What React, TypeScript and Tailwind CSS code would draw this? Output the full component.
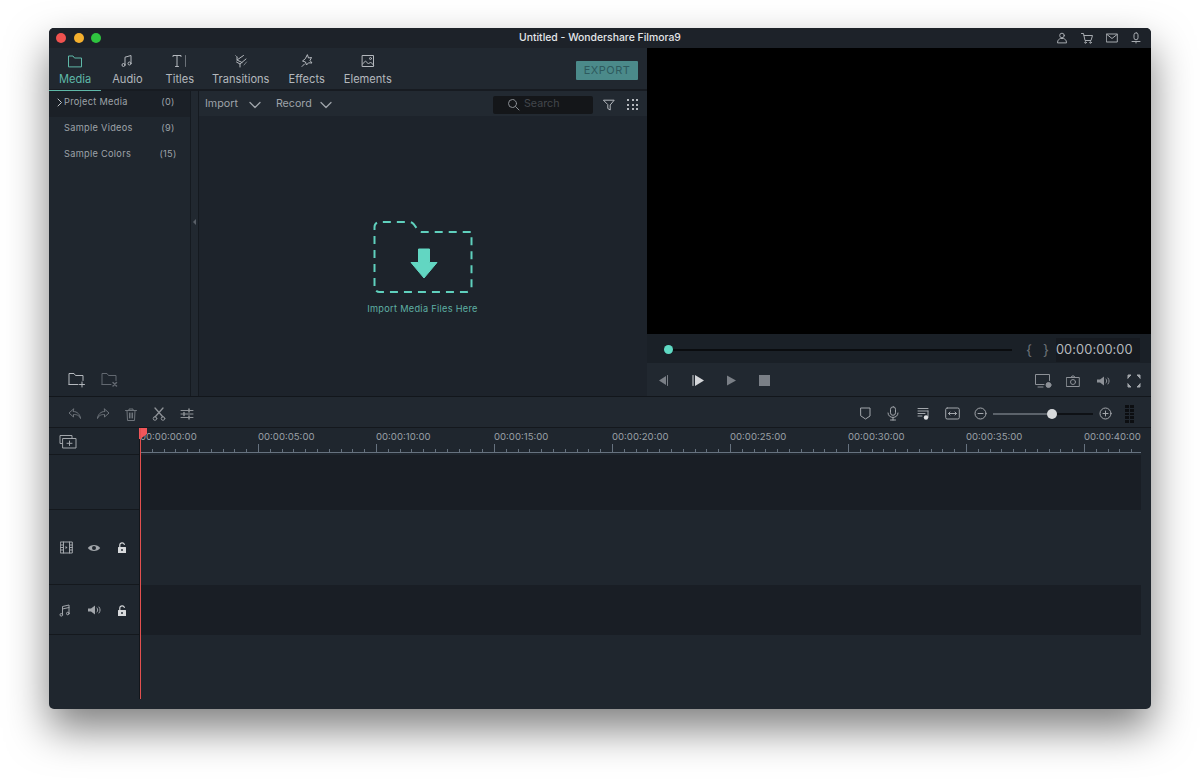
import React from "react";

const S = ({ w = 16, h = 16, vb, children, className = "" }: { w?: number; h?: number; vb?: string; children: React.ReactNode; className?: string }) => (
  <svg width={w} height={h} viewBox={vb ?? `0 0 ${w} ${h}`} fill="none" stroke="currentColor" strokeWidth={1} strokeLinecap="round" strokeLinejoin="round" className={`shrink-0 ${className}`}>
    {children}
  </svg>
);

const tabs = [
  { label: "Media", cls: "ml-[10px] text-[#5fb8a8]", icon: <S w={16} h={14}><path d="M1.5 12.5V2h4.5l1.5 2h7v8.500z" /></S> },
  { label: "Audio", cls: "ml-[21px] text-[#b4b8bd]", icon: <S w={14} h={14}><path d="M5 10.500V3.200L11 1.500v7.500" /><circle cx="3.500" cy="11" r="1.500" /><circle cx="9.500" cy="9.500" r="1.500" /></S> },
  { label: "Titles", cls: "ml-[23px] text-[#b4b8bd]", icon: <S w={16} h={14}><path d="M1 2.500V1.500h8v1M5 1.500v11M3.500 12.500h3" /><path d="M13.500 1.500v11" stroke="#6b7178" /></S> },
  { label: "Transitions", cls: "ml-[18px] text-[#b4b8bd]", icon: <S w={14} h={14}><path d="M9.500 1.500 3 6l5 2.500M3 3v3.200" /><path d="M12 5 6 10l-3.500-2M6 10V13" /><path d="M1.500 1.500 4 4M12.500 8l-2.500 3" stroke="#7d8389" /></S> },
  { label: "Effects", cls: "ml-[19px] text-[#b4b8bd]", icon: <S w={14} h={14}><path d="M7.500 1 8.500 4l3-.5-1.500 3 2 2.500-3.500-.2L6.500 11l-1-3L2.500 7l2.500-2z" /><path d="M2 12.500 4.500 10" /></S> },
  { label: "Elements", cls: "ml-[19px] text-[#b4b8bd]", icon: <S w={14} h={14}><rect x="1.500" y="1.500" width="11" height="11" /><path d="m1.500 10 3-3 3 3 2-2 3 3" /><circle cx="9.500" cy="4.500" r="1" /></S> },
];

const media = [
  { name: "Project Media", n: "(0)", active: true },
  { name: "Sample Videos", n: "(9)", active: false },
  { name: "Sample Colors", n: "(15)", active: false },
];

const marks = ["00:00:00:00", "00:00:05:00", "00:00:10:00", "00:00:15:00", "00:00:20:00", "00:00:25:00", "00:00:30:00", "00:00:35:00", "00:00:40:00"];

const Chevron = () => (
  <S w={12} h={8}><path d="M1 1.500 6 6.500l5-5" strokeWidth={1.3} /></S>
);

const Lock = () => (
  <S w={14} h={13} className="text-[#d8dadc]"><rect x="3" y="6" width="8" height="6" fill="currentColor" stroke="none" rx=".5" /><path d="M4.800 6V3.800C4.800 1.300 8.800 1.300 9.300 3.300" strokeWidth={1.200} /><rect x="6.300" y="8" width="1.400" height="2" fill="#1f262e" stroke="none" /></S>
);

const Speaker = () => (
  <S w={14} h={12}><path d="M1 4.500h3L8 1.500v9l-4-3H1z" fill="currentColor" stroke="none" /><path d="M10 4c1 1 1 3 0 4M12 3c1.500 2 1.500 4 0 6" /></S>
);

const Ruler = () => (
  <div className="flex h-[25px] items-stretch border-b border-b-[#66727f]">
    {marks.map((m) => (
      <div key={m} className="relative flex w-[118px] shrink-0 flex-col justify-end">
        <span className="absolute left-0 top-[2px] text-[9.6px] leading-[13px] text-[#9aa0a6] whitespace-nowrap">{m}</span>
        <div className="flex h-[8px] items-end">
          {Array.from({ length: 10 }).map((_, i) => (
            <div key={i} className="flex h-full w-[11.8px] items-end">
              <div className={i === 0 ? "h-[8px] w-px bg-[#66727f]" : "h-[3px] w-px bg-[#66727f]"} />
            </div>
          ))}
        </div>
      </div>
    ))}
  </div>
);

export default function App() {
  return (
    <div className="h-[779px] w-[1200px] overflow-hidden bg-white pl-[49px] pt-[28px]" style={{ fontFamily: "Inter, 'Liberation Sans', sans-serif" }}>
      <div className="flex h-[681px] w-[1102px] flex-col overflow-hidden rounded-[5px] bg-[#1f262e] shadow-[0_20px_42px_rgba(0,0,0,0.5)]">
        {/* Title bar */}
        <div className="relative flex h-[20px] shrink-0 items-center bg-[#1d2229] pl-[7px]">
          <div className="flex gap-[7.5px]">
            <span className="h-[10px] w-[10px] rounded-full bg-[#f0524f]" />
            <span className="h-[10px] w-[10px] rounded-full bg-[#f5b02e]" />
            <span className="h-[10px] w-[10px] rounded-full bg-[#2fc43f]" />
          </div>
          <span className="absolute left-[470px] top-[3px] text-[10.4px] font-medium leading-[14px] text-[#e4e6e8] whitespace-nowrap">Untitled - Wondershare Filmora9</span>
          <div className="ml-auto mr-[10px] flex items-center gap-[13px] text-[#a7abb0]">
            <S w={12} h={12}><circle cx="6" cy="3.500" r="2.300" /><path d="M1.500 10.500c0-3 2-3.500 3-4h3c1 .5 3 1 3 4z" /></S>
            <S w={12} h={12}><path d="M.5 1.500h2l1.500 7h6l1.500-5H3" /><circle cx="4.500" cy="10.500" r=".8" /><circle cx="9.500" cy="10.500" r=".8" /></S>
            <S w={12} h={12}><rect x=".7" y="2" width="10.600" height="8" /><path d="m1 2.500 5 4 5-4" /></S>
            <S w={10} h={12}><rect x="3" y=".8" width="4" height="7" rx="2" /><path d="M1 9.500h8M5 9.500v1.500" /></S>
          </div>
        </div>

        {/* Upper area */}
        <div className="flex h-[349px] shrink-0 border-b border-b-[#12161b]">
          <div className="flex w-[598px] shrink-0 flex-col">
            {/* Tabs */}
            <div className="flex h-[43px] shrink-0 border-b-2 border-b-[#171b21] bg-[#212830]">
              <div className="relative flex">
                {tabs.map((t) => (
                  <div key={t.label} className={`flex flex-col items-center pt-[6px] ${t.cls}`}>
                    <div className="flex h-[14px] items-center">{t.icon}</div>
                    <span className="mt-[3px] text-[11.1px] leading-[16px] whitespace-nowrap">{t.label}</span>
                  </div>
                ))}
                <div className="absolute bottom-[-2px] left-0 h-px w-[52px] bg-[#5fb8a8]" />
              </div>
              <div className="ml-auto mr-[9px] mt-[13px] flex h-[19px] w-[62px] items-center justify-center rounded-[1px] bg-[#4b8a8a] text-[11px] tracking-[0.5px] text-[#2e5a5e]">EXPORT</div>
            </div>
            {/* Media area */}
            <div className="flex min-h-0 flex-1">
              <div className="flex w-[141px] shrink-0 flex-col bg-[#1f262e]">
                {media.map((m) => (
                  <div key={m.name} className={`relative flex h-[26px] items-start pl-[15px] pr-[12px] pt-[3px] text-[9.2px] leading-[15px] tracking-[0.3px] text-[#9ea3a9] ${m.active ? "bg-[#1b2027]" : ""}`}>
                    {m.active && <S w={6} h={9} className="absolute left-[8px] top-[7px] text-[#c0c4c8]"><path d="m1 1 3.500 3.500L1 8" /></S>}
                    <span>{m.name}</span>
                    <span className="ml-auto w-[20px] text-center">{m.n}</span>
                  </div>
                ))}
                <div className="mt-auto flex items-center gap-[15px] pb-[8px] pl-[19px]">
                  <S w={18} h={16} className="text-[#b4b8bd]"><path d="M1 12.500V1.500h5l1.500 2H15v5M1 12.500h9" /><path d="M14 10v5M11.500 12.500h5" /></S>
                  <S w={18} h={16} className="text-[#626870]"><path d="M1 12.500V1.500h5l1.500 2H15v5M1 12.500h9" /><path d="m12 10.500 3.500 3.500M15.500 10.500 12 14" strokeWidth={1.5} /></S>
                </div>
              </div>
              {/* Divider */}
              <div className="flex w-[9px] shrink-0 items-start justify-center border-x border-x-[#151a20] bg-[#212830] pt-[128px]">
                <div className="h-0 w-0 border-y-[3px] border-r-[3px] border-y-transparent border-r-[#5a6068]" />
              </div>
              {/* Panel */}
              <div className="flex min-w-0 flex-1 flex-col bg-[#1d232b]">
                <div className="flex h-[25px] shrink-0 items-center bg-[#222931] pl-[6px] pr-[9px] pt-[2px] text-[10.7px] text-[#9ea3a9]">
                  <span>Import</span>
                  <span className="ml-[11px]"><Chevron /></span>
                  <span className="ml-[15px]">Record</span>
                  <span className="ml-[8px]"><Chevron /></span>
                  <div className="ml-auto flex h-[18px] w-[100px] items-center rounded-[2px] bg-[#141619] pl-[14px] text-[#43474c]">
                    <S w={13} h={13} className="text-[#8a8e93]"><circle cx="5.500" cy="5.500" r="4" /><path d="m8.500 8.500 3.500 3.500" /></S>
                    <span className="ml-[4px]">Search</span>
                  </div>
                  <S w={12} h={12} className="ml-[10px] text-[#b4b8bd]"><path d="M.8 1.200h10.400L7.200 6v5L4.800 9.500V6z" /></S>
                  <div className="ml-[12px] grid grid-cols-3 gap-[2.5px]">
                    {Array.from({ length: 9 }).map((_, i) => <span key={i} className="h-[2px] w-[2px] bg-[#b4b8bd]" />)}
                  </div>
                </div>
                <div className="flex flex-1 flex-col items-center pr-[1px] pt-[105px]">
                  <svg width="100" height="72" viewBox="0 0 100 72" fill="none" className="shrink-0">
                    <path d="M1.500 65V6a5 5 0 0 1 5-5h30a6 6 0 0 1 4 2l3 4a6 6 0 0 0 5 4h50v55a5 5 0 0 1-5 5H6.500a5 5 0 0 1-5-5z" stroke="#5fd0bd" strokeWidth="2" strokeDasharray="8 6" />
                    <path d="M45.500 28h11v13.500h7.500L51 57 38 41.500h7.500z" fill="#62d6c2" stroke="#62d6c2" strokeLinejoin="round" />
                  </svg>
                  <span className="mt-[9px] text-[9.2px] leading-[14px] tracking-[0.3px] text-[#5fb0a4]">Import Media Files Here</span>
                </div>
              </div>
            </div>
          </div>

          {/* Preview */}
          <div className="flex min-w-0 flex-1 flex-col">
            <div className="h-[286px] bg-black" />
            <div className="flex h-[29px] items-center bg-[#1a2027] pl-[17px] pr-[11px] pt-[2px]">
              <span className="h-[9px] w-[9px] shrink-0 rounded-full bg-[#5fd9c3]" />
              <div className="h-[2px] w-[339px] bg-[#0a0c0f]" />
              <span className="ml-[14px] text-[14px] text-[#6c7278]">{"{"}</span>
              <span className="ml-[11px] text-[14px] text-[#6c7278]">{"}"}</span>
              <div className="ml-[7px] flex h-[24px] flex-1 items-center bg-[#161a20] pt-[1px] text-[12.8px] tracking-[0.1px] text-[#b5b9bd]">00:00:00:00</div>
            </div>
            <div className="flex flex-1 items-center bg-[#212830] pl-[9px] pr-[10px] pt-[2px] text-[#7a7f86]">
              <S w={13} h={13}><path d="M10 2v9L3 6.500z" fill="currentColor" stroke="none" /><path d="M11.500 1.500v10" /></S>
              <S w={13} h={13} className="ml-[23px] text-[#d4d6d9]"><path d="M1 1.500v10" /><path d="M3 1v11l9-5.500z" fill="currentColor" stroke="none" /></S>
              <S w={13} h={13} className="ml-[20px]"><path d="M2 1.500v10l9-5z" fill="currentColor" stroke="none" /></S>
              <div className="ml-[21px] h-[11px] w-[11px] bg-[#7a7f86]" />
              <div className="ml-auto flex items-center text-[#8d9197]">
                <S w={19} h={16}><path d="M10 11.500H1.500v-10h14v6" /><path d="M4 14h5" /><circle cx="14.500" cy="12" r="2.500" fill="currentColor" /></S>
                <S w={14} h={12} className="ml-[13px]"><rect x=".7" y="2.500" width="12.600" height="9" /><circle cx="7" cy="7" r="2.500" /><path d="M5 2.500 6 1h2l1 1.500" /></S>
                <span className="ml-[16px] flex"><Speaker /></span>
                <S w={14} h={14} className="ml-[17px] text-[#a2a6ab]"><path d="M1 4V1h3L1 4zM13 4V1h-3l3 3zM13 10v3h-3l3-3zM1 10v3h3l-3-3z" fill="currentColor" /></S>
              </div>
            </div>
          </div>
        </div>

        {/* Toolbar */}
        <div className="flex h-[31px] shrink-0 items-center border-b border-b-[#14181d] bg-[#212830] pl-[19px] pr-[17px] pt-[4px] text-[#6e747b]">
          <div className="flex items-center gap-[14px]">
            <S w={14} h={12}><path d="M5.500 1 1 5l4.500 4V6.500c3 0 5.500.5 7 4-.5-4-3-7-7-7z" /></S>
            <S w={14} h={12}><path d="M8.500 1 13 5 8.500 9V6.500c-3 0-5.500.5-7 4 .5-4 3-7 7-7z" /></S>
            <S w={14} h={13} vb="-1 0 14 13"><path d="M.5 2.500h11M4 2.500V1h4v1.500M2 2.500l.5 10h7l.5-10M4.500 5v5M6 5v5M7.500 5v5" /></S>
            <S w={14} h={14} className="text-[#8e9297]"><path d="M3 1l8 9M11 1 3 10" strokeWidth={1.3} /><circle cx="3" cy="11.500" r="1.800" /><circle cx="11" cy="11.500" r="1.800" /></S>
            <S w={14} h={12} className="text-[#8e9297]"><path d="M1 2.500h12M1 6h12M1 9.500h12" /><path d="M9 1v3M4 4.500v3M9 8v3" strokeWidth={1.5} /></S>
          </div>
          <div className="ml-auto flex items-center text-[#a2a6ab]">
            <S w={11} h={13}><path d="M1 1h9v8l-4.500 3L1 9z" /></S>
            <S w={12} h={15} className="ml-[16px]"><rect x="3.500" y=".8" width="5" height="8.500" rx="2.500" /><path d="M1 7c0 6 10 6 10 0M6 11.500V14M3.500 14h5" /></S>
            <S w={13} h={13} className="ml-[18px]"><path d="M1 1.500h10M1 4h10M1 6.500h7M1 9h4" /><path d="M11 4v6" /><circle cx="9" cy="10.500" r="2.200" fill="#e0e2e4" stroke="none" /></S>
            <S w={15} h={13} className="ml-[15px]"><rect x=".7" y="1" width="13.600" height="11" rx="1.500" /><path d="M3.500 6.500h8M5 5 3.500 6.500 5 8M10 5l1.500 1.500L10 8" /></S>
            <S w={13} h={13} className="ml-[14px]"><circle cx="6.500" cy="6.500" r="5.500" /><path d="M4 6.500h5" /></S>
            <div className="relative ml-[6px] h-[2px] w-[100px] bg-[#0e1115]">
              <div className="h-full w-[59px] bg-[#5c636b]" />
              <div className="absolute left-[54px] top-[-4px] h-[10px] w-[10px] rounded-full bg-[#d8dadc]" />
            </div>
            <S w={13} h={13} className="ml-[6px]"><circle cx="6.500" cy="6.500" r="5.500" /><path d="M4 6.500h5M6.500 4v5" /></S>
            <div className="ml-[13px] grid grid-cols-2 gap-[1px]">
              {Array.from({ length: 10 }).map((_, i) => <span key={i} className="h-[2.8px] w-[4px] bg-[#0c0e11]" />)}
            </div>
          </div>
        </div>

        {/* Timeline */}
        <div className="relative flex min-h-0 flex-1 flex-col">
          <div className="absolute left-[90px] top-0 z-10 h-[11px] w-[8px] bg-[#f0565a] [clip-path:polygon(0_0,100%_0,100%_55%,15%_100%,0_100%)]" />
          <div className="absolute left-[91px] top-0 z-10 h-[271px] w-px bg-[#e2504f]" />

          <div className="flex h-[27px] shrink-0">
            <div className="flex w-[90px] shrink-0 items-center border-b border-b-[#14181d] pl-[10px] text-[#a2a6ab]">
              <S w={18} h={15}><path d="M3 9.500H1V1.500h12V4" /><rect x="4" y="4.500" width="13" height="9.500" /><path d="M8 9.300h5M10.500 7v4.500" /></S>
            </div>
            <div className="w-px shrink-0 bg-[#12161b]" />
            <div className="min-w-0 flex-1 overflow-hidden"><div className="mr-[10px] overflow-hidden"><Ruler /></div></div>
          </div>

          <div className="flex h-[55px] shrink-0">
            <div className="w-[90px] shrink-0 border-b border-b-[#14181d]" />
            <div className="w-px shrink-0 bg-[#12161b]" />
            <div className="mr-[10px] flex-1 bg-[#191e25]" />
          </div>

          <div className="flex h-[75px] shrink-0">
            <div className="flex w-[90px] shrink-0 items-center border-b border-b-[#14181d] pl-[11px] pt-[1px] text-[#a2a6ab]">
              <S w={14} h={13}><rect x=".7" y="1" width="11.600" height="11" /><path d="M3.500 1v11M9.500 1v11M.7 4h2.800M.7 6.500h2.800M.7 9h2.800M9.500 4h2.800M9.500 6.500h2.800M9.500 9h2.800" /><path d="M5.500 5v3l2-1.500z" fill="currentColor" stroke="none" /></S>
              <S w={14} h={12} className="ml-[13px]"><path d="M.8 6C3.500 2 10.500 2 13.200 6 10.500 10 3.500 10 .8 6z" fill="currentColor" stroke="none" /><circle cx="7" cy="6" r="2" fill="#1f262e" stroke="none" /></S>
              <span className="ml-[14px] flex"><Lock /></span>
            </div>
            <div className="w-px shrink-0 bg-[#12161b]" />
            <div className="mr-[10px] flex-1 bg-[#1f262e]" />
          </div>

          <div className="flex h-[50px] shrink-0">
            <div className="flex w-[90px] shrink-0 items-center border-b border-b-[#14181d] pl-[9px] pt-[1px] text-[#a2a6ab]">
              <S w={14} h={13}><path d="M4.500 10.500V2.500l6.500-1.500v8M4.500 5l6.500-1.500" /><circle cx="3.300" cy="10.800" r="1.300" /><circle cx="9.800" cy="9.500" r="1.300" /></S>
              <span className="ml-[15px] flex"><Speaker /></span>
              <span className="ml-[14px] flex"><Lock /></span>
            </div>
            <div className="w-px shrink-0 bg-[#12161b]" />
            <div className="mr-[10px] flex-1 bg-[#191e25]" />
          </div>

          <div className="flex min-h-0 flex-1">
            <div className="w-[90px] shrink-0" />
            <div className="h-[64px] w-px shrink-0 bg-[#12161b]" />
          </div>
        </div>
      </div>
    </div>
  );
}
